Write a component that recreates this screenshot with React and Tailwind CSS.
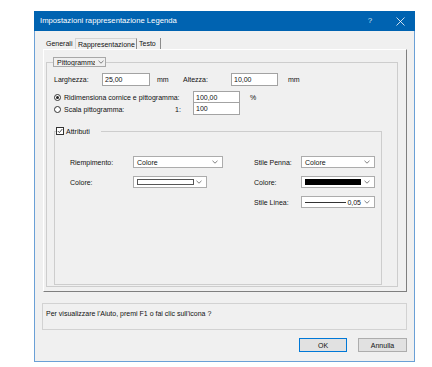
import React from 'react';

const Chevron = ({ className = '' }) => (
  <svg className={className} width="6" height="4" viewBox="0 0 6 4" fill="none" stroke="#606060" strokeWidth="0.8">
    <path d="M0.5 0.8 L3 3.2 L5.5 0.8" />
  </svg>
);

const Field = ({ value, className = '' }) => (
  <div className={`bg-white border-[#a3a3a3] pl-[2px] pt-[2px] leading-[8px] ${className}`}>{value}</div>
);

const Combo = ({ children, className = '' }) => (
  <div className={`h-[12px] bg-white border border-[#acacac] flex items-center pl-[3px] pr-[4px] ${className}`}>
    <div className="flex-1 flex items-center h-full">{children}</div>
    <Chevron />
  </div>
);

const App = () => {
  return (
    <div className="w-[432px] h-[367px] bg-white pl-[34px] pt-[11px] font-['Liberation_Sans',Arial,sans-serif] text-[7px] leading-none text-[#111]">
      <div className="w-[381px] flex flex-col">

        {/* Title bar */}
        <div className="h-[20px] bg-[#0063b1] flex items-center text-white">
          <span className="pl-[6px] flex-1 text-[7.7px]">Impostazioni rappresentazione Legenda</span>
          <span className="w-[30px] text-center text-[8px] text-[#cfe0f0]">?</span>
          <span className="w-[30px] flex justify-center">
            <svg width="9" height="9" viewBox="0 0 9 9" stroke="#ffffff" strokeWidth="0.8">
              <path d="M0.5 0.5 L8.5 8.5 M8.5 0.5 L0.5 8.5" />
            </svg>
          </span>
        </div>

        {/* Body */}
        <div className="h-[331px] bg-[#f0f0f0] border-x border-b border-[#6aa0d6] pt-[7px] flex flex-col">

          {/* Tabs */}
          <div className="flex h-[11px] ml-[8px]">
            <div className="w-[32px] pl-[3px] flex items-center">Generali</div>
            <div className="w-[62px] pl-[2px] flex items-center border-l border-t border-[#d4d4d4] border-r-[#8c8c8c] border-r">Rappresentazione</div>
            <div className="w-[24px] pl-[2px] flex items-center border-r border-[#8c8c8c]">Testo</div>
          </div>

          {/* Tab panel */}
          <div className="ml-[8px] w-[364px] h-[243px] border-l border-t border-white border-r border-b border-r-[#7f7f7f] border-b-[#7f7f7f]">
            <fieldset className="mt-[7px] ml-[2px] w-[352px] h-[230px] border border-[#cdcdcd]">
              <legend className="ml-[6px]">
                <div className="w-[53px] h-[10px] border border-[#a8a8a8] flex items-center pl-[3px]">
                  <span className="w-[38px] overflow-hidden whitespace-nowrap">Pittogramma</span>
                  <Chevron className="ml-[3px]" />
                </div>
              </legend>

              {/* Larghezza / Altezza */}
              <div className="mt-[6px] h-[13px] flex items-center pl-[7px]">
                <span className="w-[48px]">Larghezza:</span>
                <Field value="25,00" className="w-[48px] h-[13px] border" />
                <span className="ml-[7px] w-[26px]">mm</span>
                <span className="w-[48px]">Altezza:</span>
                <Field value="10,00" className="w-[47px] h-[13px] border" />
                <span className="ml-[10px]">mm</span>
              </div>

              {/* Ridimensiona */}
              <div className="mt-[5px] h-[12px] flex items-center pl-[7px]">
                <span className="w-[10px] flex items-center">
                  <span className="w-[7px] h-[7px] rounded-full border border-[#333] bg-white flex items-center justify-center">
                    <span className="w-[3px] h-[3px] rounded-full bg-[#222]" />
                  </span>
                </span>
                <span className="w-[129px]">Ridimensiona cornice e pittogramma:</span>
                <Field value="100,00" className="w-[47px] h-[12px] border border-[#6e6e6e]" />
                <span className="ml-[10px]">%</span>
              </div>

              {/* Scala */}
              <div className="h-[12px] flex items-center pl-[7px]">
                <span className="w-[10px] flex items-center">
                  <span className="w-[7px] h-[7px] rounded-full border border-[#333] bg-white" />
                </span>
                <span className="w-[111px]">Scala pittogramma:</span>
                <span className="w-[18px]">1:</span>
                <Field value="100" className="w-[47px] h-[12px] border-x border-b border-[#6e6e6e]" />
              </div>

              {/* Attributi */}
              <fieldset className="mt-[12px] ml-[7px] w-[328px] h-[158px] border border-[#cdcdcd]">
                <legend className="ml-[1px] pr-[11px]">
                  <div className="flex items-center gap-[2px]">
                    <span className="w-[8px] h-[8px] border border-[#333] bg-white flex items-center justify-center">
                      <svg width="6" height="6" viewBox="0 0 6 6" fill="none" stroke="#222" strokeWidth="0.8">
                        <path d="M0.8 3 L2.4 4.6 L5.3 1" />
                      </svg>
                    </span>
                    <span>Attributi</span>
                  </div>
                </legend>

                <div className="mt-[21px] pl-[15px] grid grid-cols-[63px_121px_47px_74px] auto-rows-[12px] gap-y-[8px] items-center">
                  <span>Riempimento:</span>
                  <Combo className="w-[90px]">Colore</Combo>
                  <span>Stile Penna:</span>
                  <Combo>Colore</Combo>

                  <span>Colore:</span>
                  <Combo className="w-[74px]">
                    <span className="w-[57px] h-[6px] bg-white border border-[#555]" />
                  </Combo>
                  <span>Colore:</span>
                  <Combo>
                    <span className="w-[56px] h-[6px] bg-black" />
                  </Combo>

                  <span />
                  <span />
                  <span>Stile Linea:</span>
                  <Combo>
                    <span className="w-[41px] h-px bg-[#333]" />
                    <span className="ml-auto mr-[3px]">0,05</span>
                  </Combo>
                </div>
              </fieldset>
            </fieldset>
          </div>

          {/* Help message */}
          <div className="mt-[11px] ml-[7px] w-[365px] h-[27px] border border-[#d2d2d2] pl-[3px] pt-[6px]">
            Per visualizzare l'Aiuto, premi F1 o fai clic sull'icona ?
          </div>

          {/* Buttons */}
          <div className="mt-[8px] flex ml-[264px]">
            <button className="w-[48px] h-[14px] bg-[#e1e1e1] border border-[#0078d7] flex items-center justify-center">OK</button>
            <button className="ml-[11px] w-[49px] h-[14px] bg-[#e1e1e1] border border-[#adadad] flex items-center justify-center">Annulla</button>
          </div>
        </div>
      </div>
    </div>
  );
};

export default App;
